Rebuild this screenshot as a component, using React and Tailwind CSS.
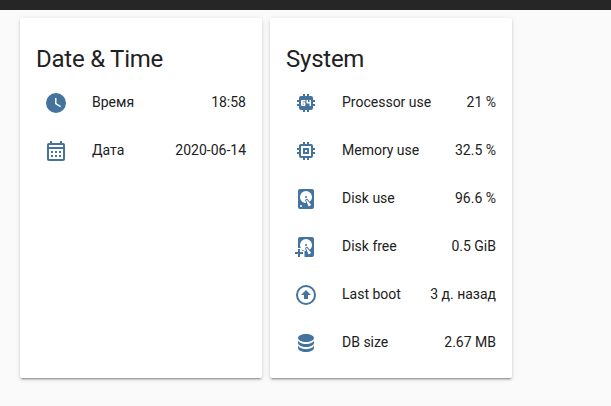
const ICONS = {
  clock:
    "M12,2A10,10 0 0,0 2,12A10,10 0 0,0 12,22A10,10 0 0,0 22,12A10,10 0 0,0 12,2M16.2,16.2L11,13V7H12.5V12.2L17,14.9L16.2,16.2Z",
  calendar:
    "M7 12H9V14H7V12M21 6V20C21 21.11 20.11 22 19 22H5C3.89 22 3 21.1 3 20V6C3 4.9 3.9 4 5 4H6V2H8V4H16V2H18V4H19C20.11 4 21 4.9 21 6M5 8H19V6H5V8M19 20V10H5V20H19M15 14V12H17V14H15M11 14V12H13V14H11M7 18V16H9V18H7M11 18V16H13V18H11M15 18V16H17V18H15Z",
  cpu: "M9,3V5H7A2,2 0 0,0 5,7V9H3V11H5V13H3V15H5V17A2,2 0 0,0 7,19H9V21H11V19H13V21H15V19H17A2,2 0 0,0 19,17V15H21V13H19V11H21V9H19V7A2,2 0 0,0 17,5H15V3H13V5H11V3M8,9H11.5V10.5H8.5V11.25H10.5A1,1 0 0,1 11.5,12.25V14A1,1 0 0,1 10.5,15H8A1,1 0 0,1 7,14V10A1,1 0 0,1 8,9M12.5,9H14V11H15.5V9H17V15H15.5V12.5H13.5A1,1 0 0,1 12.5,11.5M8.5,12.75V13.5H10V12.75",
  memory:
    "M17,17H7V7H17M21,11V9H19V7C19,5.89 18.1,5 17,5H15V3H13V5H11V3H9V5H7C5.89,5 5,5.89 5,7V9H3V11H5V13H3V15H5V17A2,2 0 0,0 7,19H9V21H11V19H13V21H15V19H17A2,2 0 0,0 19,17V15H21V13H19V11M13,13H11V11H13M15,9H9V15H15V9Z",
  disk: "M6,2H18A2,2 0 0,1 20,4V20A2,2 0 0,1 18,22H6A2,2 0 0,1 4,20V4A2,2 0 0,1 6,2M12,4A6,6 0 0,0 6,10C6,13.31 8.69,16 12.1,16L11.22,13.77C10.95,13.29 11.11,12.68 11.59,12.4L12.45,11.9C12.93,11.63 13.54,11.79 13.82,12.27L15.74,14.69C17.12,13.59 18,11.9 18,10A6,6 0 0,0 12,4M12,9A1,1 0 0,1 13,10A1,1 0 0,1 12,11A1,1 0 0,1 11,10A1,1 0 0,1 12,9M7,18A1,1 0 0,0 6,19A1,1 0 0,0 7,20A1,1 0 0,0 8,19A1,1 0 0,0 7,18M12.09,13.27L14.58,19.58L17.17,18.08L12.95,12.77L12.09,13.27Z",
  diskPlus:
    "M6,2H18A2,2 0 0,1 20,4V20A2,2 0 0,1 18,22H10.5V16H8.5L7,13H4V4A2,2 0 0,1 6,2M12,4A6,6 0 0,0 6,10C6,11.1 6.3,12.1 6.8,13H7L8.5,15C9.5,15.6 10.7,16 12.1,16L11.22,13.77C10.95,13.29 11.11,12.68 11.59,12.4L12.45,11.9C12.93,11.63 13.54,11.79 13.82,12.27L15.74,14.69C17.12,13.59 18,11.9 18,10A6,6 0 0,0 12,4M12,9A1,1 0 0,1 13,10A1,1 0 0,1 12,11A1,1 0 0,1 11,10A1,1 0 0,1 12,9M12.09,13.27L14.58,19.58L17.17,18.08L12.95,12.77L12.09,13.27ZM4,14H6V17H9V19H6V22H4V19H1V17H4Z",
  boot: "M20,12A8,8 0 0,0 12,4A8,8 0 0,0 4,12A8,8 0 0,0 12,20A8,8 0 0,0 20,12M22,12A10,10 0 0,1 12,22A10,10 0 0,1 2,12A10,10 0 0,1 12,2A10,10 0 0,1 22,12M12,7L17,12H14V16H10V12H7L12,7Z",
  database:
    "M12,3C7.58,3 4,4.79 4,7C4,9.21 7.58,11 12,11C16.42,11 20,9.21 20,7C20,4.79 16.42,3 12,3M4,9V12C4,14.21 7.58,16 12,16C16.42,16 20,14.21 20,12V9C20,11.21 16.42,13 12,13C7.58,13 4,11.21 4,9M4,14V17C4,19.21 7.58,21 12,21C16.42,21 20,19.21 20,17V14C20,16.21 16.42,18 12,18C7.58,18 4,16.21 4,14Z",
};

const dateTime = [
  { icon: "clock", name: "Время", value: "18:58" },
  { icon: "calendar", name: "Дата", value: "2020-06-14" },
];

const system = [
  { icon: "cpu", name: "Processor use", value: "21 %" },
  { icon: "memory", name: "Memory use", value: "32.5 %" },
  { icon: "disk", name: "Disk use", value: "96.6 %" },
  { icon: "diskPlus", name: "Disk free", value: "0.5 GiB" },
  { icon: "boot", name: "Last boot", value: "3 д. назад" },
  { icon: "database", name: "DB size", value: "2.67 MB" },
];

function EntityRow({ icon, name, value }) {
  return (
    <div className="flex h-10 items-center text-sm leading-5">
      <div className="flex w-10 shrink-0 justify-center pt-0.5">
        <svg viewBox="0 0 24 24" className="size-6 fill-[#44739e]" fillRule="evenodd">
          <path d={ICONS[icon]} />
        </svg>
      </div>
      <span className="ml-4 flex-1 whitespace-nowrap">{name}</span>
      <span className="whitespace-nowrap">{value}</span>
    </div>
  );
}

function EntitiesCard({ title, rows }) {
  return (
    <section className="h-[360px] w-[242px] rounded-xs bg-white px-4 pt-6 shadow-[0_2px_2px_0_rgba(0,0,0,0.14),0_1px_5px_0_rgba(0,0,0,0.12),0_3px_1px_-2px_rgba(0,0,0,0.2)]">
      <h1 className="h-10 text-2xl leading-[34px] tracking-[-0.01em]">{title}</h1>
      <div className="flex flex-col gap-2">
        {rows.map((row) => (
          <EntityRow key={row.name} {...row} />
        ))}
      </div>
    </section>
  );
}

export default function App() {
  return (
    <div className="h-[406px] w-full overflow-hidden bg-[#fafafa] font-[Roboto,'Noto_Sans',sans-serif] text-[#212121]">
      <header className="h-2.5 bg-[#262627]" />
      <main className="flex gap-2 pt-2 pl-5">
        <EntitiesCard title="Date & Time" rows={dateTime} />
        <EntitiesCard title="System" rows={system} />
      </main>
    </div>
  );
}
